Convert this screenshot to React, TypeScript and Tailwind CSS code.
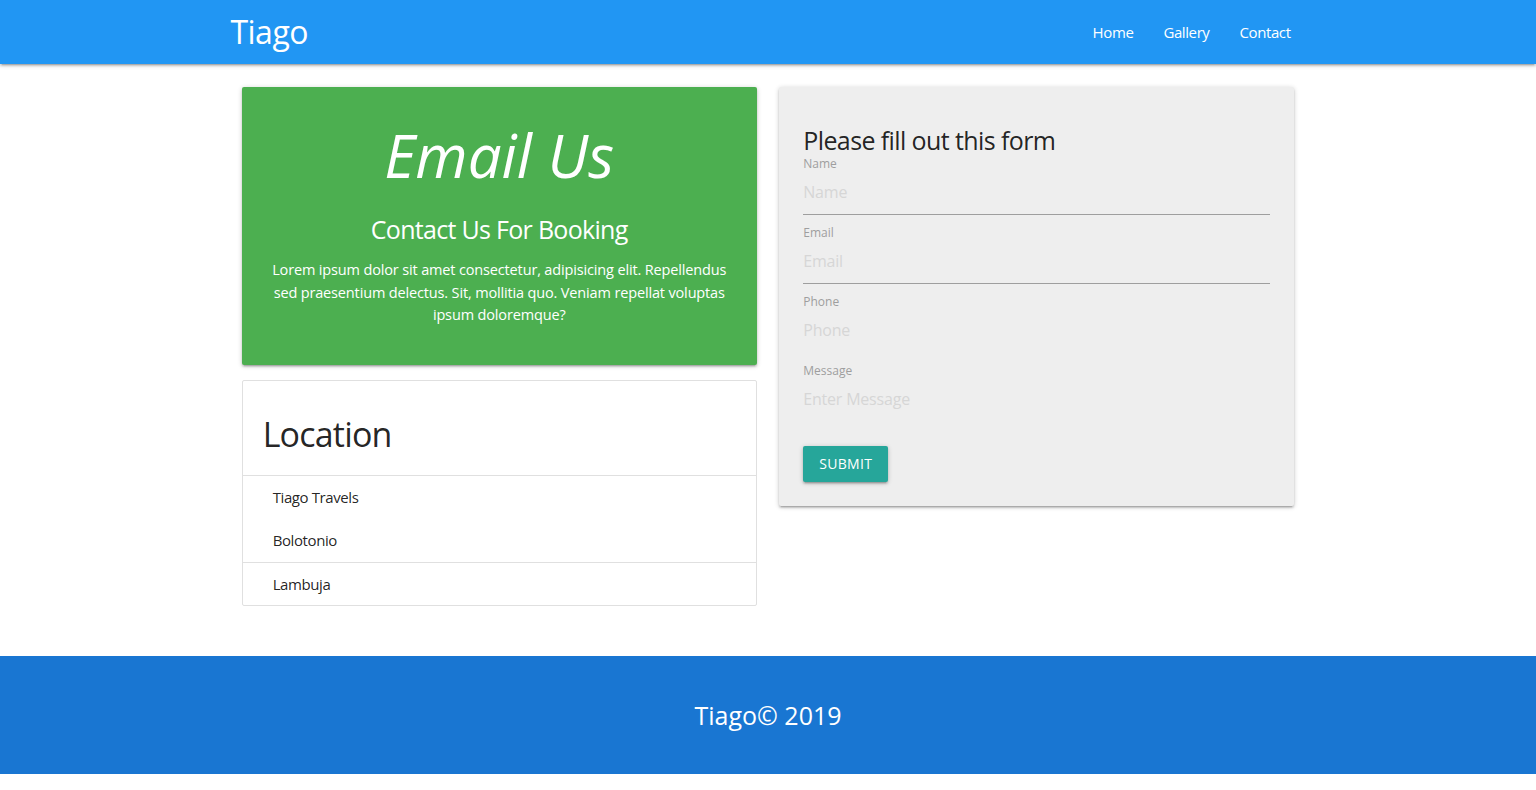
const shadow =
  "shadow-[0_2px_2px_0_rgba(0,0,0,0.14),0_3px_1px_-2px_rgba(0,0,0,0.12),0_1px_5px_0_rgba(0,0,0,0.2)]";

function Field({
  label,
  placeholder,
  underline = true,
}: {
  label: string;
  placeholder: string;
  underline?: boolean;
}) {
  return (
    <div className="mb-[11px]">
      <label className="block text-[12px] leading-[14px] text-[#9e9e9e]">{label}</label>
      <input
        type="text"
        placeholder={placeholder}
        className={`block h-[44px] w-full bg-transparent text-[16px] tracking-[-0.2px] outline-none placeholder:text-[#d6d6d6] ${
          underline ? "border-b border-[#9e9e9e]" : "border-b border-transparent"
        }`}
      />
    </div>
  );
}

export default function App() {
  return (
    <div className="min-h-[790px] bg-white text-[rgba(0,0,0,0.87)] font-['Open_Sans','Noto_Sans',sans-serif]">
      <nav className={`h-16 bg-[#2196f3] ${shadow} relative z-10`}>
        <div className="mx-auto flex h-full w-[70%] items-center justify-between">
          <a href="#" className="text-[32px] leading-[64px] tracking-[-0.5px] text-white">
            Tiago
          </a>
          <ul className="flex">
            {["Home", "Gallery", "Contact"].map((l) => (
              <li key={l}>
                <a href="#" className="block px-[15px] text-[15px] leading-[64px] tracking-[-0.4px] text-white">
                  {l}
                </a>
              </li>
            ))}
          </ul>
        </div>
      </nav>

      <main className="mx-auto grid w-[70%] grid-cols-2 pt-[23px]">
        <div className="px-[11.25px]">
          <div className={`rounded-[2px] bg-[#4caf50] px-6 pt-[34px] pb-[38px] text-center text-white ${shadow}`}>
            <h1 className="text-[60px] italic leading-[69px]">Email Us</h1>
            <h5 className="mt-[25px] text-[25px] leading-[29px] tracking-[-0.7px]">Contact Us For Booking</h5>
            <p className="mt-[15px] text-[14.5px] leading-[22.5px] tracking-[-0.15px]">
              Lorem ipsum dolor sit amet consectetur, adipisicing elit. Repellendus sed praesentium delectus. Sit,
              mollitia quo. Veniam repellat voluptas ipsum doloremque?
            </p>
          </div>

          <ul className="mt-[15px] rounded-[2px] border border-[#e0e0e0]">
            <li className="h-[95px] border-b border-[#e0e0e0] px-5 pt-[35px]">
              <h4 className="text-[34px] leading-[37.6px] tracking-[-0.8px]">Location</h4>
            </li>
            <li className="border-b border-[#e0e0e0] py-[10px] pl-[30px] text-[15px] leading-[22.5px] tracking-[-0.4px]">
              <div>Tiago Travels</div>
              <div className="mt-[21px]">Bolotonio</div>
            </li>
            <li className="py-[10px] pl-[30px] text-[15px] leading-[22.5px] tracking-[-0.4px]">Lambuja</li>
          </ul>
        </div>

        <div className="px-[11.25px]">
          <div className={`rounded-[2px] bg-[#eeeeee] px-6 pt-[39px] pb-[24px] ${shadow}`}>
            <h5 className="text-[25px] leading-[28.6px] tracking-[-0.6px]">Please fill out this form</h5>
            <form className="mt-[2px]" onSubmit={(e) => e.preventDefault()}>
              <Field label="Name" placeholder="Name" />
              <Field label="Email" placeholder="Email" />
              <Field label="Phone" placeholder="Phone" underline={false} />
              <Field label="Message" placeholder="Enter Message" underline={false} />
              <button
                type="submit"
                className={`mt-[13px] h-[36px] rounded-[2px] bg-[#26a69a] px-4 text-[14px] uppercase tracking-[0.3px] text-white ${shadow}`}
              >
                Submit
              </button>
            </form>
          </div>
        </div>
      </main>

      <footer className="mt-[50px] flex h-[118px] items-center justify-center bg-[#1976d2] text-white">
        <h5 className="text-[25px] leading-[28px]">Tiago© 2019</h5>
      </footer>
    </div>
  );
}
